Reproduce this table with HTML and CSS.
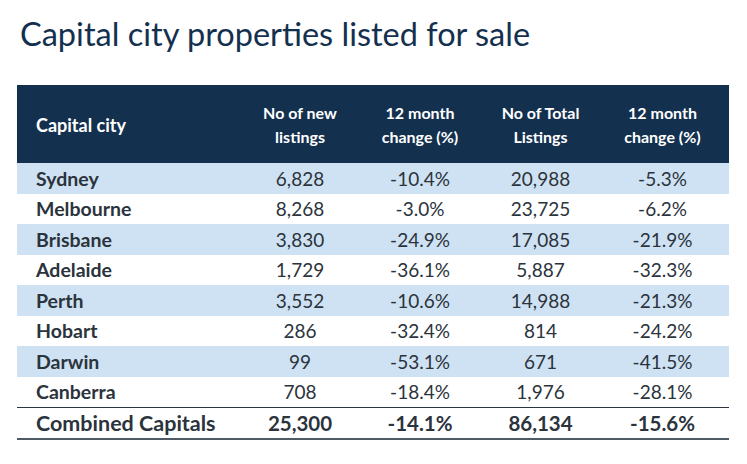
FILE: index.html
```html
<!DOCTYPE html>
<html>
<head>
<meta charset="utf-8">
<link rel="stylesheet" href="styles.css">
</head>
<body>
<h1 class="title">Capital city properties listed for sale</h1>
<table class="data">
  <colgroup>
    <col class="c1"><col class="c2"><col class="c3"><col class="c4"><col class="c5">
  </colgroup>
  <thead>
    <tr>
      <th class="city">Capital city</th>
      <th>No of new<br>listings</th>
      <th>12 month<br>change (%)</th>
      <th>No of Total<br>Listings</th>
      <th class="last">12 month<br>change (%)</th>
    </tr>
  </thead>
  <tbody>
    <tr class="alt"><td class="city">Sydney</td><td>6,828</td><td>-10.4%</td><td>20,988</td><td class="last">-5.3%</td></tr>
    <tr><td class="city">Melbourne</td><td>8,268</td><td>-3.0%</td><td>23,725</td><td class="last">-6.2%</td></tr>
    <tr class="alt"><td class="city">Brisbane</td><td>3,830</td><td>-24.9%</td><td>17,085</td><td class="last">-21.9%</td></tr>
    <tr><td class="city">Adelaide</td><td>1,729</td><td>-36.1%</td><td>5,887</td><td class="last">-32.3%</td></tr>
    <tr class="alt"><td class="city">Perth</td><td>3,552</td><td>-10.6%</td><td>14,988</td><td class="last">-21.3%</td></tr>
    <tr><td class="city">Hobart</td><td>286</td><td>-32.4%</td><td>814</td><td class="last">-24.2%</td></tr>
    <tr class="alt"><td class="city">Darwin</td><td>99</td><td>-53.1%</td><td>671</td><td class="last">-41.5%</td></tr>
    <tr><td class="city">Canberra</td><td>708</td><td>-18.4%</td><td>1,976</td><td class="last">-28.1%</td></tr>
    <tr class="total"><td class="city">Combined Capitals</td><td>25,300</td><td>-14.1%</td><td>86,134</td><td class="last">-15.6%</td></tr>
  </tbody>
</table>
</body>
</html>
```
FILE: styles.css
```css
html, body {
  margin: 0;
  padding: 0;
  background: #ffffff;
}
body {
  font-family: Lato, "Open Sans", sans-serif;
  color: #2b333c;
}
.title {
  margin: 0;
  padding: 15px 0 0 20px;
  height: 85px;
  box-sizing: border-box;
  font-weight: 400;
  font-size: 32.5px;
  line-height: 38px;
  color: #14304f;
}
.data {
  margin-left: 17px;
  width: 712px;
  border-collapse: collapse;
  table-layout: fixed;
}
.c1 { width: 223px; }
.c2 { width: 120px; }
.c3 { width: 120px; }
.c4 { width: 121px; }
.c5 { width: 128px; }
.data thead tr {
  background: #14304f;
  height: 78px;
}
.data th {
  color: #ffffff;
  font-weight: 700;
  font-size: 16px;
  line-height: 24px;
  text-align: center;
  padding: 2px 0 0 0;
  vertical-align: middle;
}
.data th.city {
  text-align: left;
  padding-left: 19px;
  font-size: 18px;
}
.data td {
  height: 30.5px;
  padding: 0;
  font-size: 19px;
  text-align: center;
  vertical-align: middle;
}
.data .last {
  padding-right: 5px;
}
.data td.city {
  text-align: left;
  padding-left: 19px;
  font-weight: 700;
  font-size: 19.5px;
}
.data tr.alt {
  background: #cfe2f3;
}
.data tr.total td {
  font-weight: 700;
  font-size: 20.5px;
  border-top: 1px solid #2b333c;
  border-bottom: 2px solid #505a64;
  height: 30px;
}
.data tr.total td.city {
  font-size: 21.5px;
}
```
